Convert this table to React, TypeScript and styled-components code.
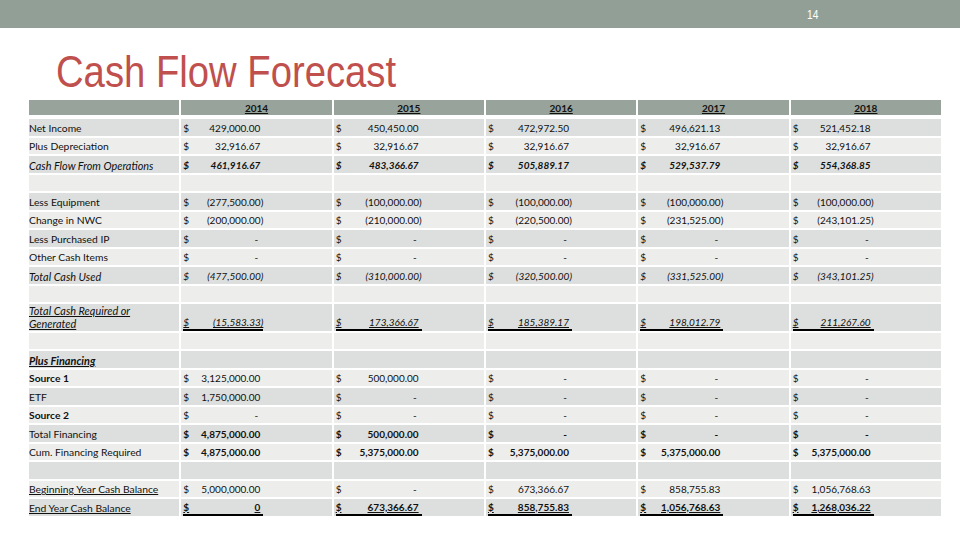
import React from 'react'
import styled, { createGlobalStyle } from 'styled-components'

const GlobalStyle = createGlobalStyle`
  html, body {
    margin: 0;
    padding: 0;
    background: #ffffff;
  }
  body {
    width: 960px;
    height: 540px;
    overflow: hidden;
    font-family: Lato, 'Liberation Sans', sans-serif;
  }
`

const Slide = styled.div`
  width: 960px;
  height: 540px;
  display: flex;
  flex-direction: column;
`

const TopBar = styled.header`
  height: 28px;
  background: #929f96;
  display: flex;
  align-items: center;
  justify-content: flex-end;
  padding-right: 141px;
`

const PageNum = styled.span`
  color: #ffffff;
  font-family: 'Liberation Sans', sans-serif;
  font-size: 12px;
  padding-top: 2px;
  transform: scaleX(0.85);
`

const Title = styled.h1`
  margin: 0;
  height: 72px;
  box-sizing: border-box;
  padding: 19px 0 0 56px;
  font-family: 'Liberation Sans', sans-serif;
  font-weight: normal;
  font-size: 45px;
  line-height: 50px;
  color: #c0504d;
  white-space: nowrap;
`

/* Arial Narrow is not installed, so the regular face is squeezed */
const TitleText = styled.span`
  display: inline-block;
  transform: scaleX(0.85);
  transform-origin: left center;
`

const Table = styled.div`
  margin-left: 29px;
  width: 912px;
  display: flex;
  flex-direction: column;
  gap: 2px;
`

const Row = styled.div<{ $h: number; $after?: number }>`
  display: grid;
  grid-template-columns: repeat(6, 1fr);
  column-gap: 2px;
  height: ${({ $h }) => $h}px;
  margin-bottom: ${({ $after }) => $after ?? 0}px;
`

type Tone = 'head' | 'dark' | 'light'

const toneBg: Record<Tone, string> = {
  head: '#97a39b',
  dark: '#dcdfdd',
  light: '#edeeec',
}

const Cell = styled.div<{ $tone: Tone; $center?: boolean }>`
  background: ${({ $tone }) => toneBg[$tone]};
  display: flex;
  align-items: flex-end;
  justify-content: ${({ $center }) => ($center ? 'center' : 'flex-start')};
  padding: 0 0 1px 0;
  box-sizing: border-box;
  min-width: 0;
`

const YearLabel = styled.span`
  font-size: 10px;
  font-weight: 700;
  line-height: 12px;
  color: #111;
  text-decoration: underline;
`

type Look = { italic?: boolean; bold?: boolean; underline?: boolean }

const Label = styled.span<{ $look: Look }>`
  font-size: ${({ $look }) => ($look.italic ? 10.9 : 10.3)}px;
  line-height: 13px;
  color: #111;
  white-space: pre-line;
  font-style: ${({ $look }) => ($look.italic ? 'italic' : 'normal')};
  font-weight: ${({ $look }) => ($look.bold ? 700 : 400)};
  text-decoration: ${({ $look }) => ($look.underline ? 'underline' : 'none')};
  text-decoration-thickness: 1.2px;
`

const ValueCell = styled(Cell)`
  padding-left: 2px;
`

const ValueBox = styled.div<{ $w: number; $look: Look; $rule?: boolean }>`
  width: ${({ $w }) => $w}px;
  display: flex;
  justify-content: space-between;
  align-items: flex-end;
  font-size: 10px;
  line-height: 13px;
  color: #111;
  font-style: ${({ $look }) => ($look.italic ? 'italic' : 'normal')};
  font-weight: ${({ $look }) => ($look.bold ? 700 : 400)};
  text-decoration: ${({ $look }) => ($look.underline ? 'underline' : 'none')};
  border-bottom: ${({ $rule }) => ($rule ? '2px solid #000' : '0')};
  margin-bottom: ${({ $rule }) => ($rule ? '-1px' : '0')};
`

const Amount = styled.span<{ $pad: number }>`
  padding-right: ${({ $pad }) => $pad}px;
`

const years = ['2014', '2015', '2016', '2017', '2018']
const boxWidths = [80, 86, 84, 83, 81]

type Line = {
  label?: string
  label2?: Look
  values?: string[]
  look?: Look
  rule?: boolean
  tall?: boolean
}

const dash = ['-', '-', '-', '-', '-']

const lines: Line[] = [
  { label: 'Net Income', values: ['429,000.00', '450,450.00', '472,972.50', '496,621.13', '521,452.18'] },
  { label: 'Plus Depreciation', values: ['32,916.67', '32,916.67', '32,916.67', '32,916.67', '32,916.67'] },
  {
    label: 'Cash Flow From Operations',
    label2: { italic: true },
    values: ['461,916.67', '483,366.67', '505,889.17', '529,537.79', '554,368.85'],
    look: { italic: true, bold: true },
  },
  {},
  { label: 'Less Equipment', values: ['(277,500.00)', '(100,000.00)', '(100,000.00)', '(100,000.00)', '(100,000.00)'] },
  { label: 'Change in NWC', values: ['(200,000.00)', '(210,000.00)', '(220,500.00)', '(231,525.00)', '(243,101.25)'] },
  { label: 'Less Purchased IP', values: dash },
  { label: 'Other Cash Items', values: dash },
  {
    label: 'Total Cash Used',
    label2: { italic: true },
    values: ['(477,500.00)', '(310,000.00)', '(320,500.00)', '(331,525.00)', '(343,101.25)'],
    look: { italic: true },
  },
  {},
  {
    label: 'Total Cash Required or\nGenerated',
    label2: { italic: true, underline: true },
    values: ['(15,583.33)', '173,366.67', '185,389.17', '198,012.79', '211,267.60'],
    look: { italic: true, underline: true },
    rule: true,
    tall: true,
  },
  {},
  { label: 'Plus Financing', label2: { italic: true, bold: true, underline: true } },
  { label: 'Source 1', label2: { bold: true }, values: ['3,125,000.00', '500,000.00', '-', '-', '-'] },
  { label: 'ETF', values: ['1,750,000.00', '-', '-', '-', '-'] },
  { label: 'Source 2', label2: { bold: true }, values: dash },
  {
    label: 'Total Financing',
    values: ['4,875,000.00', '500,000.00', '-', '-', '-'],
    look: { bold: true },
  },
  {
    label: 'Cum. Financing Required',
    values: ['4,875,000.00', '5,375,000.00', '5,375,000.00', '5,375,000.00', '5,375,000.00'],
    look: { bold: true },
  },
  {},
  {
    label: 'Beginning Year Cash Balance',
    label2: { underline: true },
    values: ['5,000,000.00', '-', '673,366.67', '858,755.83', '1,056,768.63'],
  },
  {
    label: 'End Year Cash Balance',
    label2: { underline: true },
    values: ['0', '673,366.67', '858,755.83', '1,056,768.63', '1,268,036.22'],
    look: { bold: true, underline: true },
    rule: true,
  },
]

const padFor = (v: string) => (v === '-' ? 5 : v.startsWith('(') ? 0 : 3)

export default function App() {
  return (
    <>
      <GlobalStyle />
      <Slide>
        <TopBar>
          <PageNum>14</PageNum>
        </TopBar>
        <Title>
          <TitleText>Cash Flow Forecast</TitleText>
        </Title>
        <Table>
          <Row $h={15} $after={2}>
            <Cell $tone="head" />
            {years.map((y) => (
              <Cell key={y} $tone="head" $center>
                <YearLabel>{y}</YearLabel>
              </Cell>
            ))}
          </Row>
          {lines.map((line, i) => {
            const tone: Tone = i % 2 === 0 ? 'dark' : 'light'
            const look = line.look ?? {}
            return (
              <Row key={i} $h={line.tall ? 26.5 : 16.5}>
                <Cell $tone={tone}>
                  {line.label && <Label $look={line.label2 ?? {}}>{line.label}</Label>}
                </Cell>
                {years.map((y, c) => (
                  <ValueCell key={y} $tone={tone}>
                    {line.values && (
                      <ValueBox $w={boxWidths[c]} $look={look} $rule={line.rule}>
                        <span>$</span>
                        <Amount $pad={padFor(line.values[c])}>{line.values[c]}</Amount>
                      </ValueBox>
                    )}
                  </ValueCell>
                ))}
              </Row>
            )
          })}
        </Table>
      </Slide>
    </>
  )
}
